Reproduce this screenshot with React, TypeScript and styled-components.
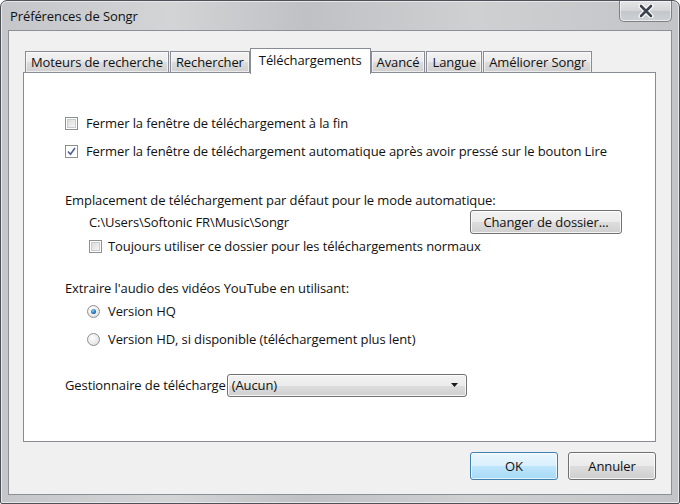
import React, { useState } from "react";
import styled, { createGlobalStyle } from "styled-components";

const GlobalStyle = createGlobalStyle`
    html, body {
        margin: 0;
        padding: 0;
        background: #ffffff;
    }
    body {
        font-family: "Open Sans", "Noto Sans", sans-serif;
        font-size: 13px;
        color: #1a1a1a;
    }
`;

const Frame = styled.div`
    width: 680px;
    height: 504px;
    box-sizing: border-box;
    display: flex;
    flex-direction: column;
    border: 1px solid #4e5258;
    border-radius: 7px 7px 2px 2px;
    background: linear-gradient(90deg, #c4c6c9 0%, #d3d4d6 25%, #bfc1c4 45%, #cfd0d2 70%, #c2c4c7 100%);
    box-shadow: inset 0 0 0 1px #e6e7e9;
    overflow: hidden;
`;

const TitleBar = styled.div`
    height: 29px;
    flex: none;
    display: flex;
    align-items: flex-start;
    justify-content: space-between;
    padding-left: 9px;
`;

const Title = styled.div`
    padding-top: 6px;
    font-size: 13px;
    color: #111;
    letter-spacing: -0.1px;
`;

const CloseButton = styled.div`
    width: 53px;
    height: 21px;
    margin-right: 7px;
    box-sizing: border-box;
    border: 1px solid #7d8086;
    border-top: none;
    border-radius: 0 0 5px 5px;
    background: linear-gradient(180deg, #e4e5e7 0%, #d3d5d8 50%, #c3c6ca 51%, #cdd0d4 100%);
    box-shadow: inset 0 0 0 1px rgba(255, 255, 255, .55);
    display: flex;
    align-items: center;
    justify-content: center;
`;

const Client = styled.div`
    flex: 1;
    margin: 0 7px 8px 7px;
    border: 1px solid #8b8f96;
    background: #f0f0f0;
    display: flex;
    flex-direction: column;
    padding: 16px 15px 0 14px;
`;

const TabStrip = styled.div`
    display: flex;
    align-items: flex-end;
    height: 26px;
    padding-left: 2px;
    position: relative;
    z-index: 1;
`;

const Tab = styled.div<{ selected?: boolean }>`
    box-sizing: border-box;
    height: ${({ selected }) => (selected ? "26px" : "22px")};
    padding: 0 ${({ selected }) => (selected ? "8px" : "5px")};
    margin-left: ${({ selected }) => (selected ? "-1px" : "0")};
    margin-right: ${({ selected }) => (selected ? "0" : "1px")};
    border: 1px solid #898c95;
    border-bottom: ${({ selected }) => (selected ? "none" : "1px solid #898c95")};
    background: ${({ selected }) =>
        selected ? "#ffffff" : "linear-gradient(180deg, #f2f2f2 0%, #ebebeb 50%, #dddddd 51%, #cfcfcf 100%)"};
    box-shadow: ${({ selected }) => (selected ? "none" : "inset 0 0 0 1px rgba(255,255,255,.6)")};
    display: flex;
    align-items: ${({ selected }) => (selected ? "flex-start" : "center")};
    padding-top: ${({ selected }) => (selected ? "2px" : "0")};
    font-size: 13px;
    letter-spacing: -0.1px;
    color: #111;
    white-space: nowrap;
    position: relative;
    z-index: ${({ selected }) => (selected ? 2 : 1)};
    margin-bottom: ${({ selected }) => (selected ? "-1px" : "0")};
`;

const Panel = styled.div`
    height: 370px;
    box-sizing: border-box;
    border: 1px solid #898c95;
    background: #ffffff;
    margin-top: -1px;
    padding: 40px 33px 0 41px;
    display: flex;
    flex-direction: column;
`;

const Row = styled.div<{ indent?: number; top?: number; h?: number; gap?: number }>`
    display: flex;
    align-items: center;
    height: ${({ h }) => h ?? 20}px;
    margin-left: ${({ indent }) => indent ?? 0}px;
    margin-top: ${({ top }) => top ?? 0}px;
    gap: ${({ gap }) => gap ?? 8}px;
    white-space: nowrap;
`;

const Label = styled.span`
    font-size: 13px;
    letter-spacing: -0.1px;
    color: #111;
`;

const FieldLabel = styled(Label)`
    min-width: 159px;
    flex: none;
`;

const SpreadRow = styled(Row)`
    justify-content: space-between;
`;

const CheckBox = styled.span<{ checked?: boolean }>`
    width: 13px;
    height: 13px;
    box-sizing: border-box;
    border: 1px solid #8e8f8f;
    background: #ffffff;
    flex: none;
    display: flex;
    align-items: center;
    justify-content: center;
    &::before {
        content: "";
        width: 9px;
        height: 9px;
        box-sizing: border-box;
        border: 1px solid #c5cbd2;
        background: linear-gradient(135deg, #dcdcdc, #f5f5f5);
        display: ${({ checked }) => (checked ? "none" : "block")};
    }
`;

const Radio = styled.span<{ checked?: boolean }>`
    width: 13px;
    height: 13px;
    box-sizing: border-box;
    border-radius: 50%;
    border: 1px solid #8e8f8f;
    background: radial-gradient(circle at 40% 35%, #ffffff 0%, #e9e9e9 60%, #d2d2d2 100%);
    flex: none;
    display: flex;
    align-items: center;
    justify-content: center;
    &::before {
        content: "";
        width: 5px;
        height: 5px;
        border-radius: 50%;
        background: radial-gradient(circle at 40% 35%, #8ad2f7 0%, #1d6fb1 60%, #0c3f72 100%);
        display: ${({ checked }) => (checked ? "block" : "none")};
    }
`;

const Button = styled.div<{ primary?: boolean; w: number; h: number }>`
    width: ${({ w }) => w}px;
    height: ${({ h }) => h}px;
    box-sizing: border-box;
    flex: none;
    border: 1px solid ${({ primary }) => (primary ? "#3c7fb1" : "#707070")};
    border-radius: 3px;
    background: ${({ primary }) =>
        primary
            ? "linear-gradient(180deg, #eaf6fd 0%, #d9f0fc 50%, #bee6fd 51%, #a7d9f5 100%)"
            : "linear-gradient(180deg, #f2f2f2 0%, #ebebeb 50%, #dddddd 51%, #cfcfcf 100%)"};
    box-shadow: inset 0 0 0 1px ${({ primary }) => (primary ? "rgba(255,255,255,.7)" : "rgba(255,255,255,.8)")};
    display: flex;
    align-items: center;
    justify-content: center;
    font-size: 13px;
    letter-spacing: -0.1px;
    color: #111;
`;

const Select = styled.div`
    width: 240px;
    height: 23px;
    box-sizing: border-box;
    border: 1px solid #707070;
    border-radius: 3px;
    background: linear-gradient(180deg, #f2f2f2 0%, #ebebeb 50%, #dddddd 51%, #cfcfcf 100%);
    box-shadow: inset 0 0 0 1px rgba(255,255,255,.8);
    display: flex;
    align-items: center;
    justify-content: space-between;
    padding: 0 8px 0 4px;
    font-size: 13px;
    letter-spacing: -0.1px;
    color: #111;
`;

const Footer = styled.div`
    display: flex;
    justify-content: flex-end;
    gap: 10px;
    padding-top: 10px;
`;

const CheckMark = () => (
    <svg width="9" height="9" viewBox="0 0 9 9">
        <path d="M1 4.5 L3.5 7.2 L8 1" fill="none" stroke="#4a5f97" strokeWidth="1.6" />
    </svg>
);

const Arrow = () => (
    <svg width="7" height="4" viewBox="0 0 7 4">
        <path d="M0 0 L7 0 L3.5 4 Z" fill="#1a1a1a" />
    </svg>
);

const CloseGlyph = () => (
    <svg width="16" height="14" viewBox="0 0 16 14">
        <path d="M3 2 L13 12 M13 2 L3 12" stroke="#ffffff" strokeWidth="5" strokeLinecap="round" />
        <path d="M3 2 L13 12 M13 2 L3 12" stroke="#3d4450" strokeWidth="2.6" strokeLinecap="round" />
    </svg>
);

const tabs = [
    "Moteurs de recherche",
    "Rechercher",
    "Téléchargements",
    "Avancé",
    "Langue",
    "Améliorer Songr",
];

const App = () => {
    const [tab] = useState<string>("Téléchargements");

    return (
        <>
            <GlobalStyle />
            <Frame>
                <TitleBar>
                    <Title>Préférences de Songr</Title>
                    <CloseButton>
                        <CloseGlyph />
                    </CloseButton>
                </TitleBar>
                <Client>
                    <TabStrip>
                        {tabs.map((t) => (
                            <Tab key={t} selected={t === tab}>{t}</Tab>
                        ))}
                    </TabStrip>
                    <Panel>
                        <Row>
                            <CheckBox />
                            <Label>Fermer la fenêtre de téléchargement à la fin</Label>
                        </Row>
                        <Row top={8}>
                            <CheckBox checked><CheckMark /></CheckBox>
                            <Label>Fermer la fenêtre de téléchargement automatique après avoir pressé sur le bouton Lire</Label>
                        </Row>

                        <Row top={29}>
                            <Label>Emplacement de téléchargement par défaut pour le mode automatique:</Label>
                        </Row>
                        <SpreadRow indent={24} h={24}>
                            <Label>C:\Users\Softonic FR\Music\Songr</Label>
                            <Button w={152} h={24}>Changer de dossier...</Button>
                        </SpreadRow>
                        <Row indent={24} top={2} gap={6}>
                            <CheckBox />
                            <Label>Toujours utiliser ce dossier pour les téléchargements normaux</Label>
                        </Row>

                        <Row top={22}>
                            <Label>Extraire l'audio des vidéos YouTube en utilisant:</Label>
                        </Row>
                        <Row indent={22} top={3}>
                            <Radio checked />
                            <Label>Version HQ</Label>
                        </Row>
                        <Row indent={22} top={8}>
                            <Radio />
                            <Label>Version HD, si disponible (téléchargement plus lent)</Label>
                        </Row>

                        <Row top={24} h={24} gap={1}>
                            <FieldLabel>Gestionnaire de télécharge</FieldLabel>
                            <Select>
                                <span>(Aucun)</span>
                                <Arrow />
                            </Select>
                        </Row>
                    </Panel>
                    <Footer>
                        <Button primary w={88} h={28}>OK</Button>
                        <Button w={88} h={28}>Annuler</Button>
                    </Footer>
                </Client>
            </Frame>
        </>
    );
};

export default App;
